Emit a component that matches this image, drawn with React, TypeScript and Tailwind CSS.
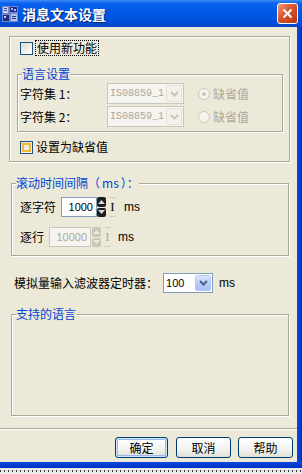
import React from 'react';

const legend = 'ml-[4px] px-0 bg-[#ece9d8] text-[#0046d5] leading-[14px]';
const etched = 'border border-[#aca899] shadow-[inset_1px_1px_0_#fff,1px_1px_0_#fff]';

function Checkbox({ hot }: { hot?: boolean }) {
  return (
    <span className="w-[13px] h-[13px] shrink-0 border border-[#1c5180] bg-[linear-gradient(135deg,#dcdcd7,#fff)] flex">
      {hot && <span className="m-[1px] flex-1 shadow-[inset_0_0_0_2px_#f8b636]" />}
    </span>
  );
}

function Radio({ on }: { on?: boolean }) {
  return (
    <span className="w-[12px] h-[12px] shrink-0 rounded-full border border-[#cac8bb] bg-[#f5f4ee] flex items-center justify-center">
      {on && <span className="w-[4px] h-[4px] rounded-full bg-[#cac8bb]" />}
    </span>
  );
}

function Chevron({ color }: { color: string }) {
  return (
    <svg width="9" height="6" viewBox="0 0 9 6">
      <path d="M1 1 L4.5 4.5 L8 1" fill="none" stroke={color} strokeWidth="2" />
    </svg>
  );
}

function DisabledCombo() {
  return (
    <div className="w-[77px] h-[21px] border border-[#c9c7ba] bg-[#f5f4f0] flex items-center">
      <span className="flex-1 pl-[2px] font-['Liberation_Mono',monospace] text-[10px] text-[#aca899]">IS08859_1</span>
      <span className="w-[16px] h-[17px] mr-[1px] rounded-[2px] bg-[#f2f1ea] border border-[#e4e2d8] flex items-center justify-center">
        <Chevron color="#c9c7ba" />
      </span>
    </div>
  );
}

function Spinner({ disabled }: { disabled?: boolean }) {
  const c = disabled ? 'bg-[#c9c7ba]' : 'bg-[#1e1e1e]';
  const t = disabled ? '#ece9d8' : '#d8d8d8';
  return (
    <div className="w-[9px] h-[20px] flex flex-col gap-[1px]">
      <span className={`flex-1 rounded-[2px] ${c} flex items-center justify-center`}>
        <svg width="7" height="4" viewBox="0 0 7 4"><path d="M0 4 L3.5 0 L7 4Z" fill={t} /></svg>
      </span>
      <span className={`flex-1 rounded-[2px] ${c} flex items-center justify-center`}>
        <svg width="7" height="4" viewBox="0 0 7 4"><path d="M0 0 L3.5 4 L7 0Z" fill={t} /></svg>
      </span>
    </div>
  );
}

function Beam({ disabled }: { disabled?: boolean }) {
  return (
    <span className={`w-[7px] h-[20px] flex items-center justify-center border-y border-[#c9c7ba] rounded-[2px] font-['Liberation_Serif',serif] text-[13px] ${disabled ? 'text-[#aca899]' : 'text-black'}`}>
      I
    </span>
  );
}

function Button({ label, def, w }: { label: string; def?: boolean; w: string }) {
  return (
    <button className={`${w} h-[21px] rounded-[3px] border border-[#003c74] bg-[linear-gradient(#fff,#f2f2ee_60%,#e0dfd7)] text-[12px] leading-[14px] ${def ? 'shadow-[inset_0_0_0_1px_#cee7ff,inset_0_0_0_2px_#98b8ea]' : ''}`}>
      {label}
    </button>
  );
}

export default function App() {
  return (
    <div className="w-[302px] h-[474px] flex flex-col overflow-hidden font-['Noto_Sans_CJK_SC',sans-serif] text-[12px] leading-[14px] text-black">
      {/* title bar */}
      <div className="h-[27px] shrink-0 flex items-center pl-[2px] pr-[4px] bg-[linear-gradient(#3d8df7,#0c62ee_12%,#0058e6_45%,#0050de_80%,#0843c4)]">
        <svg width="16" height="16" viewBox="0 0 16 16">
          <rect x="0" y="0" width="16" height="16" fill="#6f86c6" />
          <rect x="1" y="1" width="5" height="6" fill="#c8d0e8" />
          <rect x="2" y="2" width="3" height="1" fill="#3a4fa0" />
          <rect x="2" y="4" width="3" height="1" fill="#3a4fa0" />
          <rect x="8" y="1" width="7" height="5" fill="#1d2e86" />
          <rect x="9" y="2" width="2" height="2" fill="#9fb3ff" />
          <rect x="12" y="3" width="2" height="2" fill="#9fb3ff" />
          <rect x="1" y="9" width="6" height="6" fill="#1d2e86" />
          <rect x="2" y="10" width="2" height="2" fill="#c8d0e8" />
          <rect x="9" y="8" width="6" height="7" fill="#b6c2e6" />
          <rect x="10" y="10" width="4" height="1" fill="#2a3a90" />
          <rect x="10" y="12" width="4" height="1" fill="#2a3a90" />
        </svg>
        <span className="ml-[4px] text-white font-bold text-[14px] leading-[16px] [text-shadow:1px_1px_0_#0a246a]">消息文本设置</span>
        <span className="ml-auto w-[21px] h-[21px] rounded-[3px] border border-white bg-[linear-gradient(135deg,#f09a7c,#d9532b_45%,#c0360f)] flex items-center justify-center">
          <svg width="11" height="11" viewBox="0 0 11 11">
            <path d="M1.5 1.5 L9.5 9.5 M9.5 1.5 L1.5 9.5" stroke="#fff" strokeWidth="2" />
          </svg>
        </span>
      </div>

      <div className="flex flex-1 min-h-0">
        <div className="flex-1 bg-[#ece9d8] flex flex-col">
          {/* new function box */}
          <fieldset className={`ml-[9px] mt-[9px] w-[281px] h-[126px] pl-[10px] ${etched}`}>
            <div className="mt-[4px] h-[14px] flex items-center">
              <Checkbox />
              <span className="ml-[3px] px-[1px] outline outline-1 outline-dotted outline-black">使用新功能</span>
            </div>

            <fieldset className={`ml-[-3px] mt-[12px] w-[266px] h-[65px] ${etched}`}>
              <legend className={legend}>语言设置</legend>
              <div className="mt-[2px] pl-[2px] flex flex-col gap-[2px]">
                <div className="flex items-center">
                  <span className="w-[87px]">字符集 1：</span>
                  <DisabledCombo />
                  <span className="ml-[14px]"><Radio on /></span>
                  <span className="ml-[3px] text-[#aca899]">缺省值</span>
                </div>
                <div className="flex items-center">
                  <span className="w-[87px]">字符集 2：</span>
                  <DisabledCombo />
                  <span className="ml-[14px]"><Radio /></span>
                  <span className="ml-[3px] text-[#aca899]">缺省值</span>
                </div>
              </div>
            </fieldset>

            <div className="mt-[8px] h-[14px] flex items-center">
              <Checkbox hot />
              <span className="ml-[3px]">设置为缺省值</span>
            </div>
          </fieldset>

          {/* scroll interval */}
          <fieldset className={`ml-[11px] mt-[14px] w-[278px] h-[80px] pl-[8px] ${etched}`}>
            <legend className="ml-[-4px] px-0 bg-[#ece9d8] text-[#0046d5] leading-[14px]">
              滚动时间间隔（<span className="mx-[2px]">ms</span>）：
            </legend>
            <div className="mt-[7px] h-[20px] flex items-center">
              <span className="w-[41px]">逐字符</span>
              <span className="w-[36px] h-[20px] border border-[#7f9db9] bg-white text-right pr-[3px] font-['Liberation_Sans',sans-serif] text-[11px] leading-[18px]">1000</span>
              <Spinner />
              <span className="ml-[3px]"><Beam /></span>
              <span className="ml-[8px] font-['Liberation_Sans',sans-serif] text-[12px]">ms</span>
            </div>
            <div className="mt-[10px] h-[20px] flex items-center">
              <span className="w-[29px]">逐行</span>
              <span className="w-[42px] h-[20px] border border-[#c9c7ba] bg-[#f5f4f0] text-right pr-[3px] font-['Liberation_Sans',sans-serif] text-[11px] leading-[18px] text-[#aca899]">10000</span>
              <span className="ml-[1px]"><Spinner disabled /></span>
              <span className="ml-[3px]"><Beam disabled /></span>
              <span className="ml-[7px] font-['Liberation_Sans',sans-serif] text-[12px]">ms</span>
            </div>
          </fieldset>

          {/* analog filter */}
          <div className="ml-[14px] mt-[17px] h-[20px] flex items-center">
            <span>模拟量输入滤波器定时器：</span>
            <div className="ml-[5px] w-[50px] h-[20px] border border-[#7f9db9] bg-white flex items-center">
              <span className="flex-1 pl-[2px] font-['Liberation_Sans',sans-serif] text-[11px]">100</span>
              <span className="w-[16px] h-[16px] mr-[1px] rounded-[2px] bg-[linear-gradient(#d9e6fd,#b9cdf9_50%,#a8c0f6)] border border-[#b5c8f5] flex items-center justify-center">
                <Chevron color="#4d6185" />
              </span>
            </div>
            <span className="ml-[6px] font-['Liberation_Sans',sans-serif] text-[12px]">ms</span>
          </div>

          {/* supported languages */}
          <fieldset className={`ml-[11px] mt-[14px] w-[278px] h-[109px] ${etched}`}>
            <legend className={legend}>支持的语言</legend>
          </fieldset>

          <div className="mt-[12px] h-[2px] border-t border-[#aca899] border-b border-b-white" />

          <div className="mt-[7px] flex">
            <span className="ml-[115px]"><Button label="确定" def w="w-[53px]" /></span>
            <span className="ml-[8px]"><Button label="取消" w="w-[55px]" /></span>
            <span className="ml-[7px]"><Button label="帮助" w="w-[55px]" /></span>
          </div>
        </div>
        <div className="w-[5px] bg-[linear-gradient(90deg,#0a48e0,#0840d6_40%,#0030b8)]" />
      </div>

      <div className="h-[6px] shrink-0 bg-[linear-gradient(#0a48e0,#0033c0)]" />
      <div className="h-[6px] shrink-0 bg-[#ebebeb] pt-[2px]">
        <div className="h-[2px] bg-[repeating-linear-gradient(90deg,#333_0_1px,transparent_1px_4px)]" />
      </div>
    </div>
  );
}
